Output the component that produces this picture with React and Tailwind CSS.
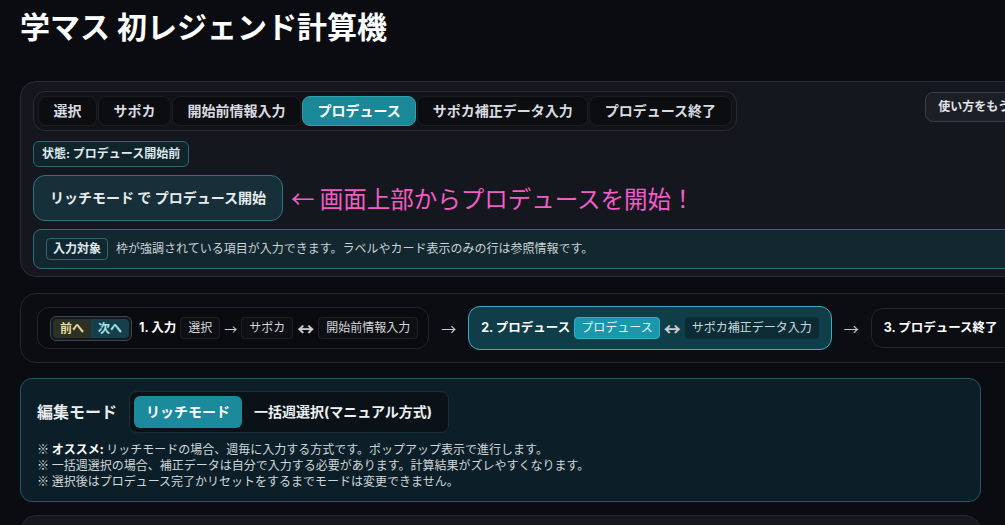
import React from 'react'

const tabs = ['選択', 'サポカ', '開始前情報入力', 'プロデュース', 'サポカ補正データ入力', 'プロデュース終了']

const jp = { fontFamily: '"Noto Sans CJK JP", sans-serif' }

function Chip({ children, active, tone = 'dark', compact }) {
    const styles = {
        dark: 'bg-[#0d0f13] border-[#1d2026] text-[#d3d7dc]',
        teal: 'bg-[#0b2c35] border-[#0b2c35] text-[#c9d8dc]',
        active: 'bg-[#1b97ab] border-[#2db2c5] text-[#e3f7fa]',
    }
    return (
        <span className={`${compact ? 'px-1.5' : 'px-[7px]'} py-px rounded border text-xs leading-[18px] whitespace-nowrap ${styles[active ? 'active' : tone]}`}>
            {children}
        </span>
    )
}

function Arrow({ children = '→', className = '' }) {
    return <span className={`text-[#c8ccd2] leading-none ${className}`} style={jp}>{children}</span>
}

export default function App() {
    return (
        <div
            className="h-screen overflow-hidden bg-[#0a0c12] px-5 text-white"
            style={{ fontFamily: 'Inter, "Noto Sans CJK JP", "Noto Sans", sans-serif' }}
        >
            {/* Title */}
            <h1 className="pt-[9px] text-[30px] leading-9 font-bold text-white">
                学マス 初レジェンド計算機
            </h1>

            {/* Top control panel */}
            <div className="mt-9 w-[1077px] rounded-2xl border border-[#2a2d34] bg-[#14171e] px-3 pt-[9px] pb-[7px] flex flex-col gap-2">
                <div className="flex items-start justify-between">
                    <div className="flex gap-px rounded-xl border border-[#2a2c32] bg-[#111318] p-1">
                        {tabs.map(t => (
                            <div
                                key={t}
                                className={
                                    t === 'プロデュース'
                                        ? 'px-[14.5px] py-1 text-sm leading-5 font-semibold rounded-lg border border-[#2aa3b3] bg-[#1b8898] text-white'
                                        : 'px-[14.5px] py-1 text-sm leading-5 font-semibold rounded-lg border border-[#1b1d22] bg-[#0c0d11] text-[#d9dbe0]'
                                }
                            >
                                {t}
                            </div>
                        ))}
                    </div>
                    <button className="mt-px mr-[13px] rounded-lg border border-[#3a3d45] bg-[#1c1f26] px-3 py-1 text-xs leading-5 font-bold text-[#e2e4e8]">
                        使い方をもう一度見る
                    </button>
                </div>

                <div className="mt-px">
                    <span className="inline-block rounded-md border border-[#2b6670] bg-[#10242c] px-2 py-1 text-xs leading-4 font-bold text-[#dfe8ea]">
                        状態: プロデュース開始前
                    </span>
                </div>

                <div className="flex items-center gap-2">
                    <button className="rounded-xl border border-[#2c7580] bg-[#172f39] px-4 py-3 text-sm leading-5 font-bold text-[#e6ecee]">
                        リッチモード で プロデュース開始
                    </button>
                    <span className="text-[23.5px] leading-8 text-[#f25cc6]" style={jp}>
                        ← 画面上部からプロデュースを開始！
                    </span>
                </div>

                <div className="flex items-center gap-2 rounded-lg border border-[#2a6f7a] bg-[#13272f] px-3 py-2">
                    <span className="rounded border border-[#2f6670] bg-[#0f2730] px-1.5 py-[2px] text-xs leading-4 font-bold text-[#dfe9eb]">
                        入力対象
                    </span>
                    <span className="text-xs text-[#c7d2d6]">
                        枠が強調されている項目が入力できます。ラベルやカード表示のみの行は参照情報です。
                    </span>
                </div>
            </div>

            {/* Step flow */}
            <div className="mt-4 w-[1100px] rounded-2xl border border-[#23262d] bg-[#0b0d13] px-4 py-3 flex items-center gap-3">
                <div className="flex items-center gap-1 rounded-xl border border-[#22252b] bg-[#0a0b0e] pl-3 pr-[10px] py-[7.5px]">
                    <div className="mr-[3px] flex rounded-md border border-[#3b4852] bg-[#141a1f] p-[2px]">
                        <span className="rounded-l bg-[#2b3125] px-[7px] py-px text-xs leading-[17px] font-bold text-[#e8dc9c]">前へ</span>
                        <span className="rounded-r bg-[#173f4b] px-[7px] py-px text-xs leading-[17px] font-bold text-[#a3e3ee]">次へ</span>
                    </div>
                    <span className="text-[12.5px] font-bold text-white whitespace-nowrap">1. 入力</span>
                    <Chip>選択</Chip>
                    <Arrow className="text-[13px]">→</Arrow>
                    <Chip>サポカ</Chip>
                    <Arrow className="text-[17px] font-bold">↔</Arrow>
                    <Chip>開始前情報入力</Chip>
                </div>

                <Arrow className="text-[15px]">→</Arrow>

                <div className="flex items-center gap-1 rounded-xl border border-[#3aaebf] bg-[#0f3e49] px-3 py-[10px]">
                    <span className="text-[12.5px] font-bold text-white whitespace-nowrap">2. プロデュース</span>
                    <Chip active compact>プロデュース</Chip>
                    <Arrow className="text-[17px] font-bold">↔</Arrow>
                    <Chip tone="teal" compact>サポカ補正データ入力</Chip>
                </div>

                <Arrow className="text-[15px]">→</Arrow>

                <div className="flex items-center gap-1 rounded-xl border border-[#22252b] px-3 py-2">
                    <span className="mr-1 text-[12.5px] font-bold text-white whitespace-nowrap">3. プロデュース終了</span>
                    <Chip>リザルト</Chip>
                </div>
            </div>

            {/* Edit mode */}
            <div className="mt-[15px] mr-1 rounded-xl border border-[#245a66] bg-[#0c1f28] p-3 pb-[12px]">
                <div className="flex items-center gap-3">
                    <span className="pl-1 text-base font-bold text-[#e8eef0]">編集モード</span>
                    <div className="flex rounded-lg border border-[#1e2c33] bg-[#0a1217] p-1">
                        <span className="rounded-md bg-[#1a8a9c] px-3 py-1.5 text-sm leading-5 font-bold text-white">リッチモード</span>
                        <span className="px-3 py-1.5 text-sm leading-5 font-bold text-[#eef1f3]">一括週選択(マニュアル方式)</span>
                    </div>
                </div>
                <div className="mt-2 pl-1 text-xs leading-4 text-[#d0d7da]" style={jp}>
                    <p>※ <b className="font-bold text-white">オススメ:</b> リッチモードの場合、週毎に入力する方式です。ポップアップ表示で進行します。</p>
                    <p>※ 一括週選択の場合、補正データは自分で入力する必要があります。計算結果がズレやすくなります。</p>
                    <p>※ 選択後はプロデュース完了かリセットをするまでモードは変更できません。</p>
                </div>
            </div>

            {/* Next panel */}
            <div className="mt-[13px] mr-1 h-40 rounded-2xl border border-[#24272e] bg-[#15181f]" />
        </div>
    )
}
